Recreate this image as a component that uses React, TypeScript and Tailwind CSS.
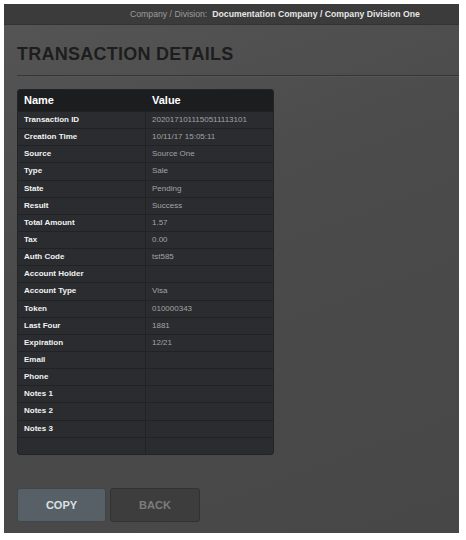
import React from 'react';

// ── Datos ────────────────────────────────────────────────────────────────────

const filas: [string, string][] = [
  ['Transaction ID', '2020171011150511113101'],
  ['Creation Time', '10/11/17 15:05:11'],
  ['Source', 'Source One'],
  ['Type', 'Sale'],
  ['State', 'Pending'],
  ['Result', 'Success'],
  ['Total Amount', '1.57'],
  ['Tax', '0.00'],
  ['Auth Code', 'tst585'],
  ['Account Holder', ''],
  ['Account Type', 'Visa'],
  ['Token', '010000343'],
  ['Last Four', '1881'],
  ['Expiration', '12/21'],
  ['Email', ''],
  ['Phone', ''],
  ['Notes 1', ''],
  ['Notes 2', ''],
  ['Notes 3', ''],
  ['', ''],
];

// ── Componente ────────────────────────────────────────────────────────────────

export default function App() {
  return (
    <div className="w-[466px] h-[540px] bg-white pt-[4px] pl-[4px] pr-[7px] pb-[7px] font-['Liberation_Sans',Arial,sans-serif]">
      <div className="h-full flex flex-col bg-[linear-gradient(160deg,#555555_0%,#4b4b4b_40%,#474747_100%)]">
        {/* Barra superior */}
        <div className="h-[21px] shrink-0 bg-[#3b3b3b] border-b border-[#333] flex items-center pl-[126px] text-[8.7px] leading-none">
          <span className="text-[#9c9c9c]">Company / Division:</span>
          <span className="ml-[5px] font-bold text-[#e6e6e6]">Documentation Company / Company Division One</span>
        </div>

        {/* Título */}
        <div className="pl-[13px] pt-[20px]">
          <h1 className="text-[18px] leading-none font-bold text-[#1d1d1d] tracking-[0.25px]">TRANSACTION DETAILS</h1>
        </div>
        <div className="ml-[13px] mt-[12px] h-px bg-[#363636] shadow-[0_1px_0_#555]" />

        {/* Tabla */}
        <div className="ml-[13px] mt-[13px] w-[257px] rounded-[3px] overflow-hidden bg-[#2a2c2f] border border-[#232426]">
          <div className="h-[21px] bg-[#1c1d1f] flex items-center text-[11px] font-bold text-white">
            <div className="w-[128px] pl-[6px]">Name</div>
            <div className="pl-[6px]">Value</div>
          </div>
          {filas.map(([label, value], i) => (
            <div key={i} className="h-[17.15px] flex border-t border-[#212224]">
              <div className="w-[128px] pl-[6px] flex items-center border-r border-[#222325] text-[8px] font-bold text-[#f2f2f2]">{label}</div>
              <div className="pl-[6px] flex items-center text-[8px] text-[#a3a3a3]">{value}</div>
            </div>
          ))}
        </div>

        {/* Botones */}
        <div className="ml-[13px] mt-[33px] flex gap-[4px]">
          <button className="w-[89px] h-[34px] rounded-[3px] bg-[#566066] border border-[#40474b] text-[11px] font-bold text-[#dde1e3]">COPY</button>
          <button className="w-[90px] h-[34px] rounded-[3px] bg-[#3d3d3d] border border-[#323232] text-[11px] font-bold text-[#7c7c7c]">BACK</button>
        </div>
      </div>
    </div>
  );
}
